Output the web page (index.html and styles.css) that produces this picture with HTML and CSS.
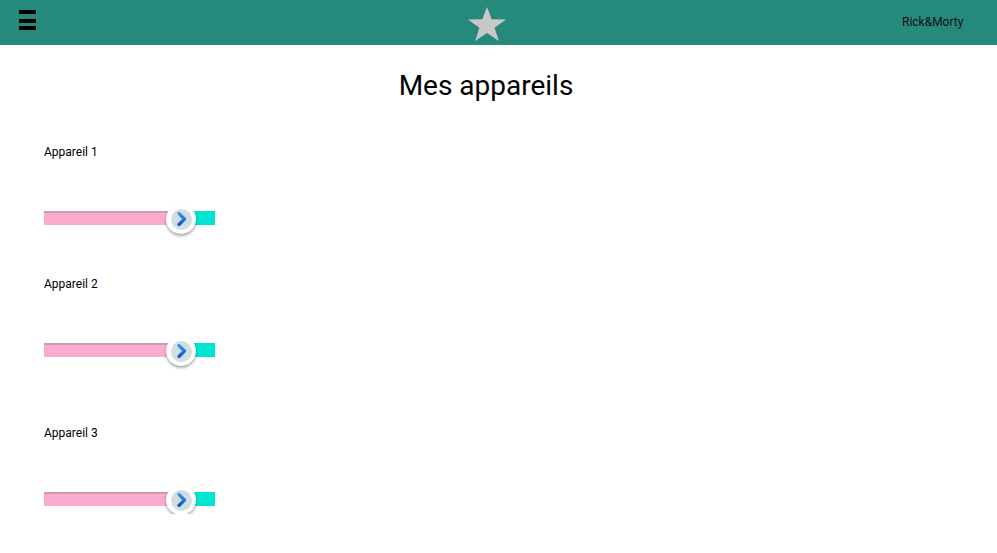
FILE: index.html
```html
<!DOCTYPE html>
<html lang="fr">
<head>
<meta charset="utf-8">
<title>Mes appareils</title>
<link rel="stylesheet" href="styles.css">
</head>
<body>
<header class="topbar">
  <div class="menu">
    <svg width="18" height="21" viewBox="0 0 18 21"><rect x="0" y="0" width="17" height="4" fill="#000"/><rect x="0" y="9" width="17" height="4" fill="#000"/><rect x="0" y="16" width="17" height="4" fill="#000"/></svg>
  </div>
  <div class="logo">
    <svg width="40" height="34" viewBox="0 0 40 34"><polygon points="20,0 24.7,12.2 39,12.6 27.6,20.8 31.8,34 20,26 8.2,34 12.4,20.8 1,12.6 15.3,12.2" fill="#c8c8c8"/></svg>
  </div>
  <div class="user">Rick&amp;Morty</div>
</header>
<main class="content">
  <h1 class="title">Mes appareils</h1>
  <section class="device">
    <div class="device-name">Appareil 1</div>
    <div class="slider">
      <div class="track-left"></div>
      <div class="thumb"><span class="thumb-inner"><svg width="12" height="14" viewBox="0 0 12 14"><defs><linearGradient id="g1" x1="0" y1="0" x2="0" y2="1"><stop offset="0" stop-color="#2f9be8"/><stop offset="1" stop-color="#1457c4"/></linearGradient></defs><polyline points="3,1.5 8.5,7 3,12.5" fill="none" stroke="url(#g1)" stroke-width="3.2" stroke-linecap="round" stroke-linejoin="round"/></svg></span></div>
      <div class="track-right"></div>
    </div>
  </section>
  <section class="device">
    <div class="device-name">Appareil 2</div>
    <div class="slider">
      <div class="track-left"></div>
      <div class="thumb"><span class="thumb-inner"><svg width="12" height="14" viewBox="0 0 12 14"><defs><linearGradient id="g2" x1="0" y1="0" x2="0" y2="1"><stop offset="0" stop-color="#2f9be8"/><stop offset="1" stop-color="#1457c4"/></linearGradient></defs><polyline points="3,1.5 8.5,7 3,12.5" fill="none" stroke="url(#g2)" stroke-width="3.2" stroke-linecap="round" stroke-linejoin="round"/></svg></span></div>
      <div class="track-right"></div>
    </div>
  </section>
  <section class="device device-spaced">
    <div class="device-name">Appareil 3</div>
    <div class="slider">
      <div class="track-left"></div>
      <div class="thumb"><span class="thumb-inner"><svg width="12" height="14" viewBox="0 0 12 14"><defs><linearGradient id="g3" x1="0" y1="0" x2="0" y2="1"><stop offset="0" stop-color="#2f9be8"/><stop offset="1" stop-color="#1457c4"/></linearGradient></defs><polyline points="3,1.5 8.5,7 3,12.5" fill="none" stroke="url(#g3)" stroke-width="3.2" stroke-linecap="round" stroke-linejoin="round"/></svg></span></div>
      <div class="track-right"></div>
    </div>
  </section>
</main>
</body>
</html>
```

FILE: styles.css
```css
* { box-sizing: border-box; }
html, body { margin: 0; padding: 0; background: #fff; }
body { font-family: Roboto, "Liberation Sans", sans-serif; color: #000; }

.topbar {
  height: 45px;
  background: #258a7b;
  display: flex;
  align-items: center;
  justify-content: space-between;
  padding: 0 33px 0 19px;
}
.menu { width: 60px; height: 21px; display: flex; align-items: flex-start; margin-top: -5px; }
.menu svg { display: block; }
.logo { display: flex; margin-left: -7px; margin-top: 3px; }
.logo svg { display: block; }
.user { width: 62px; font-size: 12px; line-height: 14px; color: #111; text-align: left; margin-top: -2px; }

.content { padding: 0 0 0 44px; }
.title {
  margin: 25px 0 0 -44px;
  padding-right: 25px;
  font-size: 28px;
  line-height: 32px;
  font-weight: 400;
  text-align: center;
}
.device { margin-top: 44px; }
.device:first-of-type { margin-top: 43px; }
.device.device-spaced { margin-top: 61px; }
.device-name { font-size: 12px; line-height: 14px; }

.slider {
  margin-top: 44px;
  width: 171px;
  height: 30px;
  display: flex;
  align-items: center;
}
.track-left {
  width: 127px;
  height: 14px;
  background: #faaccf;
  border-top: 2px solid #cf9aaf;
  margin-right: -5px;
}
.track-right {
  flex: 1;
  height: 14px;
  background: #00e5d2;
  margin-left: -5px;
}
.thumb {
  position: relative;
  z-index: 1;
  width: 30px;
  height: 30px;
  border-radius: 50%;
  background: #fff;
  box-shadow: 0 2px 3px rgba(0,0,0,0.35);
  display: flex;
  align-items: center;
  justify-content: center;
  margin-top: 2px;
}
.thumb-inner {
  width: 21px;
  height: 21px;
  border-radius: 50%;
  background: #d3dde2;
  display: flex;
  align-items: center;
  justify-content: center;
}
.thumb-inner svg { display: block; margin-left: 2px; }
```
